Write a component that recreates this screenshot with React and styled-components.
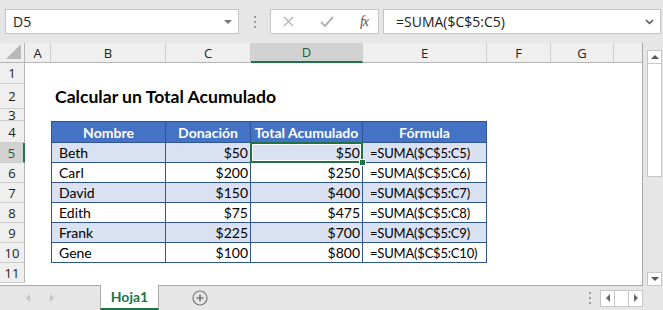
import React from "react";
import styled, { createGlobalStyle, css } from "styled-components";

const GlobalStyle = createGlobalStyle`
  html, body { margin: 0; padding: 0; background: #e6e6e6; }
  body { font-family: "Lato", "Liberation Sans", sans-serif; }
`;

const GREEN = "#217346";
const COLS = [25, 26, 115, 85, 112, 124, 64, 63, 29];
const LETTERS = ["A", "B", "C", "D", "E", "F", "G", ""];
const ROWS = [21, 25, 12, 22, 20, 20, 20, 20, 20, 20, 20];

const people = [
  ["Beth", "$50", "$50", "=SUMA($C$5:C5)"],
  ["Carl", "$200", "$250", "=SUMA($C$5:C6)"],
  ["David", "$150", "$400", "=SUMA($C$5:C7)"],
  ["Edith", "$75", "$475", "=SUMA($C$5:C8)"],
  ["Frank", "$225", "$700", "=SUMA($C$5:C9)"],
  ["Gene", "$100", "$800", "=SUMA($C$5:C10)"],
];

const Window = styled.div`
  width: 663px;
  height: 310px;
  display: flex;
  flex-direction: column;
  background: #e6e6e6;
  overflow: hidden;
`;

const FormulaBar = styled.div`
  height: 43px;
  display: flex;
  align-items: flex-start;
  padding: 9px 2px 0 5px;
  box-sizing: border-box;
`;

const Field = styled.div`
  height: 25px;
  box-sizing: border-box;
  background: #fff;
  border: 1px solid #c6c6c6;
  display: flex;
  align-items: center;
  font-family: "Open Sans", "Liberation Sans", sans-serif;
  font-size: 14px;
  color: #222;
  ${(p) => p.$w && css`width: ${p.$w}px;`}
  ${(p) => p.$grow && css`flex: 1;`}
  padding: 0 6px;
`;

const FieldText = styled.span`
  flex: 1;
  padding-left: ${(p) => p.$pad || 0}px;
`;

const Grip = styled.div`
  width: 31px;
  height: 25px;
  display: flex;
  flex-direction: column;
  align-items: center;
  justify-content: center;
  gap: 3px;
  span {
    width: 2px;
    height: 2px;
    background: #9a9a9a;
  }
`;

const Buttons = styled(Field)`
  width: 109px;
  margin-right: 4px;
  justify-content: space-between;
  padding: 0 10px 0 12px;
`;

const Fx = styled.span`
  font-family: "Liberation Serif", serif;
  font-style: italic;
  font-size: 14px;
  color: #555;
  letter-spacing: -1px;
`;

const Sheet = styled.div`
  display: flex;
  height: 243px;
`;

const Grid = styled.div`
  flex: 0 0 643px;
  display: grid;
  grid-template-columns: ${COLS.map((c) => c + "px").join(" ")};
  grid-template-rows: 20px ${ROWS.map((r) => r + "px").join(" ")};
  background: #fff;
  border-bottom: 1px solid #a8a8a8;
  border-right: 1px solid #a8a8a8;
  box-sizing: border-box;
  overflow: hidden;
`;

const Head = styled.div`
  background: ${(p) => (p.$on ? "#d2d2d2" : "#efefef")};
  color: ${(p) => (p.$on ? "#1b5e3a" : "#222")};
  font-family: "Open Sans", "Liberation Sans", sans-serif;
  font-size: 13px;
  display: flex;
  align-items: center;
  justify-content: center;
  box-sizing: border-box;
  border-right: 1px solid #cdcdcd;
  border-bottom: 1px solid #cdcdcd;
  ${(p) => p.$on && p.$col && css`border-bottom: 2px solid ${GREEN};`}
  ${(p) => p.$on && p.$row && css`border-right: 2px solid ${GREEN};`}
  ${(p) => p.$row && css`border-right-color: ${p.$on ? GREEN : "#b5b5b5"};`}
  ${(p) => p.$col && css`border-bottom-color: ${p.$on ? GREEN : "#b5b5b5"};`}
`;

const Corner = styled(Head)`
  position: relative;
  border-bottom-color: #b5b5b5;
  border-right-color: #b5b5b5;
  svg {
    position: absolute;
    right: 3px;
    bottom: 3px;
  }
`;

const Empty = styled.div``;

const Title = styled.div`
  display: flex;
  align-items: center;
  padding-left: 4px;
  white-space: nowrap;
  font-weight: 700;
  font-size: 17.6px;
  color: #000;
`;

const Cell = styled.div`
  position: relative;
  box-sizing: border-box;
  display: flex;
  align-items: center;
  font-size: ${(p) => (p.$tight ? "13px" : "14px")};
  letter-spacing: ${(p) => (p.$tight ? "-0.2px" : "0")};
  color: #000;
  white-space: nowrap;
  padding: 0 ${(p) => (p.$right ? "2px" : "7px")};
  justify-content: ${(p) => (p.$right ? "flex-end" : "flex-start")};
  background: ${(p) => (p.$band ? "#d9e1f2" : "#fff")};
  border-right: 1px solid #2f5597;
  border-bottom: 1px solid #2f5597;
  ${(p) => p.$first && css`border-left: 1px solid #2f5597;`}
  ${(p) =>
    p.$th &&
    css`
      background: #4472c4;
      color: #fff;
      font-weight: 700;
      font-size: 14px;
      letter-spacing: 0;
      justify-content: center;
      border-top: 1px solid #2f5597;
    `}
  ${(p) =>
    p.$active &&
    css`
      &::before {
        content: "";
        position: absolute;
        inset: -1px -1px -1px -1px;
        border: 2px solid ${GREEN};
        box-shadow: inset 0 0 0 1px #fff;
      }
      &::after {
        content: "";
        position: absolute;
        right: -4px;
        bottom: -4px;
        width: 5px;
        height: 5px;
        background: ${GREEN};
        border: 1px solid #fff;
        z-index: 2;
      }
    `}
`;

const VScroll = styled.div`
  flex: 1;
  display: flex;
  flex-direction: column;
  padding: 7px 1px 0 4px;
`;

const ScrollBtn = styled.div`
  height: 14px;
  box-sizing: border-box;
  background: #fff;
  border: 1px solid #c6c6c6;
  display: flex;
  align-items: center;
  justify-content: center;
`;

const Thumb = styled.div`
  height: 113px;
  background: #fff;
  border: 1px solid #c6c6c6;
  border-top: none;
  box-sizing: border-box;
`;

const Track = styled.div`
  flex: 1;
`;

const TabBar = styled.div`
  flex: 1;
  display: flex;
  align-items: stretch;
`;

const NavArrows = styled.div`
  width: 100px;
  display: flex;
  align-items: center;
  gap: 20px;
  padding-left: 26px;
  box-sizing: border-box;
`;

const Tab = styled.div`
  width: 59px;
  box-sizing: border-box;
  background: #fff;
  border-left: 1px solid #ababab;
  border-right: 1px solid #ababab;
  border-bottom: 2px solid ${GREEN};
  color: ${GREEN};
  font-weight: 700;
  font-size: 14px;
  display: flex;
  align-items: center;
  justify-content: center;
  margin-top: -1px;
`;

const AddSheet = styled.div`
  width: 82px;
  display: flex;
  align-items: center;
  justify-content: center;
`;

const Spacer = styled.div`
  flex: 1;
`;

const HGrip = styled(Grip)`
  width: 20px;
  height: auto;
`;

const HScroll = styled.div`
  display: flex;
  align-self: center;
  margin-right: 20px;
  height: 15px;
  border: 1px solid #c6c6c6;
  background: #fff;
`;

const HBtn = styled.div`
  width: ${(p) => p.$w || 13}px;
  display: flex;
  align-items: center;
  justify-content: center;
  & + & {
    border-left: 1px solid #c6c6c6;
  }
`;

function Tri({ dir = "down", color = "#666", size = 4 }) {
  const s = size;
  const pts = {
    down: `0,0 ${2 * s},0 ${s},${s}`,
    up: `0,${s} ${2 * s},${s} ${s},0`,
    left: `${s},0 ${s},${2 * s} 0,${s}`,
    right: `0,0 0,${2 * s} ${s},${s}`,
  }[dir];
  const vert = dir === "down" || dir === "up";
  return (
    <svg width={vert ? 2 * s : s} height={vert ? s : 2 * s}>
      <polygon points={pts} fill={color} />
    </svg>
  );
}

export default function App() {
  const cells = [];

  // column header row
  cells.push(
    <Corner key="corner">
      <svg width="15" height="15">
        <polygon points="15,0 15,15 0,15" fill="#b8b8b8" />
      </svg>
    </Corner>
  );
  LETTERS.forEach((l, i) =>
    cells.push(
      <Head key={"c" + i} $col $on={l === "D"}>
        {l}
      </Head>
    )
  );

  ROWS.forEach((_, r) => {
    const rowNum = r + 1;
    cells.push(
      <Head key={"r" + rowNum} $row $on={rowNum === 5}>
        {rowNum}
      </Head>
    );
    for (let c = 0; c < 8; c++) {
      const key = `${rowNum}-${c}`;
      if (rowNum === 2 && c === 1) {
        cells.push(<Title key={key}>Calcular un Total Acumulado</Title>);
      } else if (rowNum === 4 && c >= 1 && c <= 4) {
        const labels = ["Nombre", "Donación", "Total Acumulado", "Fórmula"];
        cells.push(
          <Cell key={key} $th $first={c === 1}>
            {labels[c - 1]}
          </Cell>
        );
      } else if (rowNum >= 5 && rowNum <= 10 && c >= 1 && c <= 4) {
        const data = people[rowNum - 5];
        cells.push(
          <Cell
            key={key}
            $band={rowNum % 2 === 1}
            $first={c === 1}
            $right={c === 2 || c === 3}
            $tight={c === 4}
            $active={rowNum === 5 && c === 3}
          >
            {data[c - 1]}
          </Cell>
        );
      } else {
        cells.push(<Empty key={key} />);
      }
    }
  });

  return (
    <Window>
      <GlobalStyle />
      <FormulaBar>
        <Field $w={234}>
          <FieldText $pad={1}>D5</FieldText>
          <Tri dir="down" color="#777" size={4} />
        </Field>
        <Grip>
          <span />
          <span />
          <span />
        </Grip>
        <Buttons>
          <svg width="11" height="11" viewBox="0 0 11 11">
            <path d="M1 1L10 10M10 1L1 10" stroke="#b3b3b3" strokeWidth="1.3" />
          </svg>
          <svg width="14" height="11" viewBox="0 0 14 11">
            <path d="M1 6L5 10L13 1" stroke="#b3b3b3" strokeWidth="2" fill="none" />
          </svg>
          <Fx>fx</Fx>
        </Buttons>
        <Field $grow>
          <FieldText $pad={6}>=SUMA($C$5:C5)</FieldText>
          <svg width="9" height="6" viewBox="0 0 9 6">
            <path d="M1 1L4.5 4.5L8 1" stroke="#555" strokeWidth="1.5" fill="none" />
          </svg>
        </Field>
      </FormulaBar>

      <Sheet>
        <Grid>{cells}</Grid>
        <VScroll>
          <ScrollBtn>
            <Tri dir="up" color="#555" size={4} />
          </ScrollBtn>
          <Thumb />
          <Track />
          <ScrollBtn>
            <Tri dir="down" color="#555" size={4} />
          </ScrollBtn>
        </VScroll>
      </Sheet>

      <TabBar>
        <NavArrows>
          <Tri dir="left" color="#c4c4c4" size={4} />
          <Tri dir="right" color="#c4c4c4" size={4} />
        </NavArrows>
        <Tab>Hoja1</Tab>
        <AddSheet>
          <svg width="16" height="16" viewBox="0 0 16 16">
            <circle cx="8" cy="8" r="7" fill="none" stroke="#777" strokeWidth="1.2" />
            <path d="M8 4.5V11.5M4.5 8H11.5" stroke="#777" strokeWidth="1.6" />
          </svg>
        </AddSheet>
        <Spacer />
        <HGrip>
          <span />
          <span />
          <span />
        </HGrip>
        <HScroll>
          <HBtn>
            <Tri dir="left" color="#666" size={4} />
          </HBtn>
          <HBtn />
          <HBtn>
            <Tri dir="right" color="#666" size={4} />
          </HBtn>
        </HScroll>
      </TabBar>
    </Window>
  );
}
